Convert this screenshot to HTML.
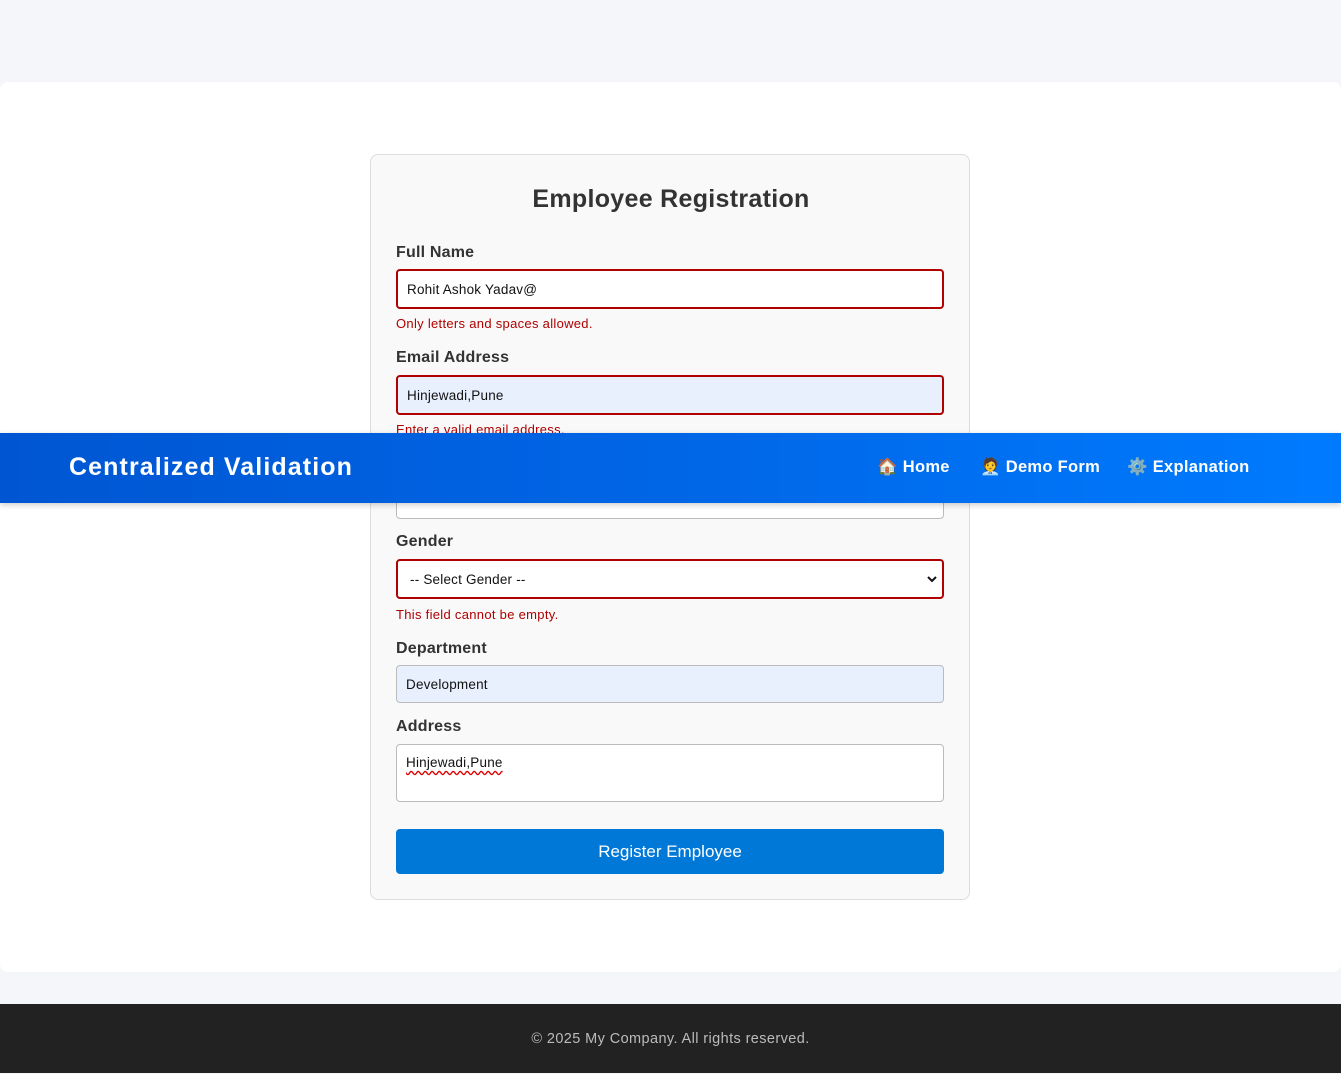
<!DOCTYPE html>
<html><head><meta charset="utf-8"><style>
*{box-sizing:border-box;margin:0;padding:0}
body{width:1341px;height:1073px;background:#f5f6f9;font-family:"Liberation Sans",sans-serif;position:relative;overflow:hidden;color:#333}
.main{position:absolute;left:0;top:82px;width:1341px;height:890px;background:#fff;border-radius:8px}
.card{position:absolute;left:370px;top:154px;width:600px;height:746px;background:#f9f9f9;border:1px solid #ddd;border-radius:8px}
.a{position:absolute}
h2{position:absolute;left:0;width:600px;top:30px;text-align:center;font-size:25px;font-weight:bold;color:#333;letter-spacing:.3px}
.lbl{position:absolute;left:25px;font-size:16px;font-weight:bold;color:#333;letter-spacing:.2px}
.in{position:absolute;left:25px;width:548px;border-radius:4px;background:#fff;font-size:13.5px;color:#111;padding-left:9px;display:flex;align-items:center;letter-spacing:.2px}
.bad{border:2px solid #b00000}
.ok{border:1px solid #bbb}
.err{position:absolute;left:25px;font-size:13px;color:#b00000;letter-spacing:.3px}
.nav{position:absolute;left:0;top:433px;width:1341px;height:70px;background:linear-gradient(90deg,#0056d2,#0066e6 50%,#007bff);box-shadow:0 2px 6px rgba(0,0,0,.2);color:#fff}
.nav .t{position:absolute;left:69px;top:20px;font-size:25px;font-weight:bold;letter-spacing:1.1px}
.nav .l{position:absolute;top:25px;font-size:16.5px;font-weight:bold;letter-spacing:.3px}
.foot{position:absolute;left:0;top:1004px;width:1341px;height:69px;background:#222;color:#bbb;font-size:14.5px;text-align:center;line-height:70px;letter-spacing:.4px}
</style></head><body>
<div class="main"></div>
<div class="card">
<h2>Employee Registration</h2>
<div class="lbl" style="top:89px">Full Name</div>
<div class="in bad" style="top:114px;height:40px">Rohit Ashok Yadav@</div>
<div class="err" style="top:161px">Only letters and spaces allowed.</div>
<div class="lbl" style="top:194px">Email Address</div>
<div class="in bad" style="top:220px;height:40px;background:#e8f0fe">Hinjewadi,Pune</div>
<div class="err" style="top:267px">Enter a valid email address.</div>
<div class="in ok" style="top:320px;height:44px"></div>
<div class="lbl" style="top:378px">Gender</div>
<div class="in bad" style="top:404px;height:40px;padding-left:12px">-- Select Gender --<svg style="position:absolute;right:5px;top:14px" width="10" height="8" viewBox="0 0 10 8"><path d="M1 2l4 4 4-4" stroke="#111" stroke-width="2" fill="none"/></svg></div>
<div class="err" style="top:452px">This field cannot be empty.</div>
<div class="lbl" style="top:485px">Department</div>
<div class="in ok" style="top:510px;height:38px;background:#e8f0fe">Development</div>
<div class="lbl" style="top:563px">Address</div>
<div class="in ok" style="top:589px;height:58px;align-items:flex-start;padding-top:10px"><span style="text-decoration:underline wavy #d00;text-underline-offset:3px">Hinjewadi,Pune</span></div>
<div class="a" style="left:25px;top:674px;width:548px;height:45px;background:#0078d7;border-radius:4px;color:#fff;font-size:17px;text-align:center;line-height:45px">Register Employee</div>
</div>
<div class="nav">
<div class="t">Centralized Validation</div>
<div class="l" style="left:877px">🏠 Home</div>
<div class="l" style="left:980px">🧑‍💼 Demo Form</div>
<div class="l" style="left:1127px">⚙️ Explanation</div>
</div>
<div class="foot">© 2025 My Company. All rights reserved.</div>
</body></html>
